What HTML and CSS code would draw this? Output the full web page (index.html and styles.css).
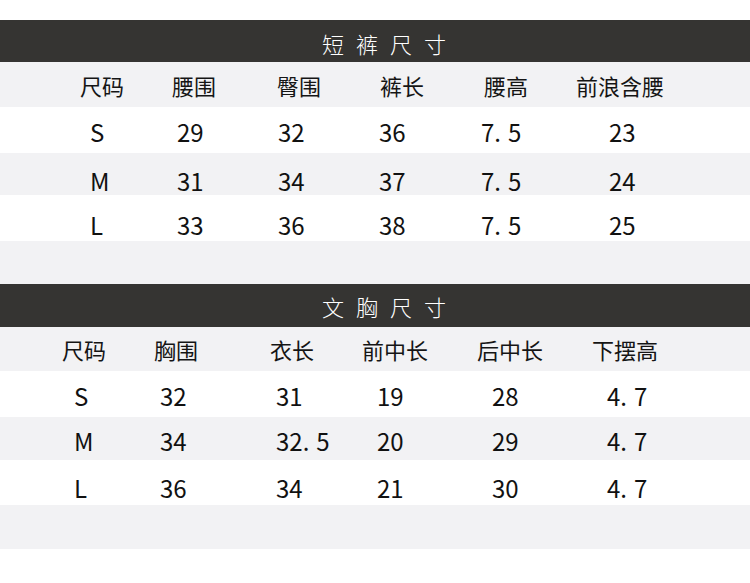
FILE: index.html
```html
<!DOCTYPE html>
<html lang="zh-CN">
<head>
<meta charset="utf-8">
<link rel="stylesheet" href="styles.css">
</head>
<body>
<section class="sheet t1">
  <div class="title">短裤尺寸</div>
  <div class="row head">
    <span>尺码</span><span>腰围</span><span>臀围</span><span>裤长</span><span>腰高</span><span>前浪含腰</span>
  </div>
  <div class="row data r1">
    <span>S</span><span>29</span><span>32</span><span>36</span><span>7<span class="pt">.</span>5</span><span>23</span>
  </div>
  <div class="row data r2 alt">
    <span>M</span><span>31</span><span>34</span><span>37</span><span>7<span class="pt">.</span>5</span><span>24</span>
  </div>
  <div class="row data r3">
    <span>L</span><span>33</span><span>36</span><span>38</span><span>7<span class="pt">.</span>5</span><span>25</span>
  </div>
  <div class="row blank alt"></div>
</section>
<section class="sheet t2">
  <div class="title">文胸尺寸</div>
  <div class="row head">
    <span>尺码</span><span>胸围</span><span>衣长</span><span>前中长</span><span>后中长</span><span>下摆高</span>
  </div>
  <div class="row data r1">
    <span>S</span><span>32</span><span>31</span><span>19</span><span>28</span><span>4<span class="pt">.</span>7</span>
  </div>
  <div class="row data r2 alt">
    <span>M</span><span>34</span><span>32<span class="pt">.</span>5</span><span>20</span><span>29</span><span>4<span class="pt">.</span>7</span>
  </div>
  <div class="row data r3">
    <span>L</span><span>36</span><span>34</span><span>21</span><span>30</span><span>4<span class="pt">.</span>7</span>
  </div>
  <div class="row blank alt"></div>
</section>
</body>
</html>
```
FILE: styles.css
```css
* { box-sizing: border-box; }
html, body { margin: 0; padding: 0; }
body {
  width: 750px;
  height: 583px;
  padding-top: 20px;
  background: #ffffff;
  color: #151515;
  font-family: "Noto Sans CJK SC", "Noto Sans", sans-serif;
  font-size: 22px;
  overflow: hidden;
}
.sheet { display: flex; flex-direction: column; }
.title {
  background: #353432;
  color: #ffffff;
  display: flex;
  align-items: center;
  justify-content: center;
  letter-spacing: 12px;
  padding-left: 30px;
  font-size: 22px;
  font-weight: 300;
}
.row {
  display: grid;
  align-items: center;
  white-space: nowrap;
  background: #ffffff;
}
.row.head, .row.alt { background: #f2f2f4; }
.data { font-size: 24px; font-weight: 400; color: #111111; }
.pt { margin-right: 7px; }

/* section 1 : shorts */
.t1 .title { height: 42px; padding-top: 4px; }
.t1 .head { height: 45px; padding-left: 80px; grid-template-columns: 92px 105px 103px 104px 92px 1fr; }
.t1 .data { padding-left: 90px; grid-template-columns: 87px 101px 101px 102px 128px 1fr; }
.t1 .r1 { height: 46px; padding-top: 2px; }
.t1 .r2 { height: 42px; padding-top: 10px; }
.t1 .r3 { height: 46px; padding-top: 12px; }
.t1 .blank { height: 43px; }

/* section 2 : bra */
.t2 .title { height: 43px; padding-top: 1px; }
.t2 .head { height: 44px; padding-left: 62px; grid-template-columns: 92px 116px 92px 115px 115px 1fr; }
.t2 .data { padding-left: 74px; grid-template-columns: 86px 116px 101px 115px 115px 1fr; }
.t2 .r1 { height: 46px; padding-top: 2px; }
.t2 .r2 { height: 43px; padding-top: 3px; }
.t2 .r3 { height: 45px; padding-top: 9px; }
.t2 .blank { height: 44px; }
```
